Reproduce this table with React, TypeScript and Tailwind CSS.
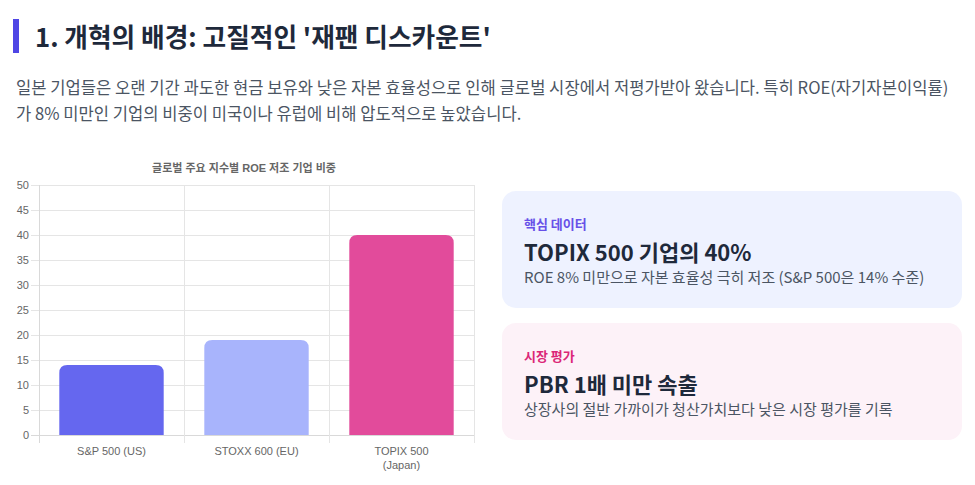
import React from "react";

const bars = [
  { label: ["S&P 500 (US)"], value: 14, color: "#6567ef" },
  { label: ["STOXX 600 (EU)"], value: 19, color: "#a8b4fc" },
  { label: ["TOPIX 500", "(Japan)"], value: 40, color: "#e24b9b" },
];

function Chart() {
  const left = 26;
  const right = 461;
  const top = 35;
  const bottom = 285;
  const cat = (right - left) / 3;
  const bw = cat * 0.72;
  const ticks = [0, 5, 10, 15, 20, 25, 30, 35, 40, 45, 50];
  const y = (v: number) => bottom - (v / 50) * (bottom - top);
  const grid = "#e5e5e5";
  const font = "'Liberation Sans', 'Noto Sans CJK KR', sans-serif";
  return (
    <svg width={462} height={330} viewBox="0 0 462 330" className="block shrink-0">
      <text x={231} y={22} textAnchor="middle" fontSize={11} fontWeight={700} fill="#666" fontFamily={font}>
        글로벌 주요 지수별 ROE 저조 기업 비중
      </text>
      {ticks.map((t) => (
        <g key={t}>
          <line x1={left - 8} x2={right} y1={y(t) + 0.5} y2={y(t) + 0.5} stroke={t === 0 ? "#d9d9d9" : grid} strokeWidth={1} />
          <text x={left - 10} y={y(t) + 4} textAnchor="end" fontSize={11} fill="#666" fontFamily={font}>
            {t}
          </text>
        </g>
      ))}
      {[0, 1, 2, 3].map((i) => (
        <line
          key={i}
          x1={left + i * cat + 0.5}
          x2={left + i * cat + 0.5}
          y1={top}
          y2={bottom + 8}
          stroke={i === 0 ? "#d9d9d9" : grid}
          strokeWidth={1}
        />
      ))}
      {bars.map((b, i) => {
        const cx = left + cat * i + cat / 2;
        const x0 = cx - bw / 2;
        const yt = y(b.value);
        const r = 8;
        const d = `M${x0},${bottom} L${x0},${yt + r} Q${x0},${yt} ${x0 + r},${yt} L${x0 + bw - r},${yt} Q${x0 + bw},${yt} ${x0 + bw},${yt + r} L${x0 + bw},${bottom} Z`;
        return (
          <g key={i}>
            <path d={d} fill={b.color} />
            {b.label.map((l, j) => (
              <text key={j} x={cx} y={305 + j * 14} textAnchor="middle" fontSize={11} fill="#666" fontFamily={font}>
                {l}
              </text>
            ))}
          </g>
        );
      })}
    </svg>
  );
}

export default function App() {
  return (
    <div
      className="w-[975px] h-[485px] bg-white px-[13px] pt-[19px] overflow-hidden"
      style={{ fontFamily: "'Noto Sans CJK KR', 'Noto Sans', sans-serif" }}
    >
      <h2 className="border-l-[6px] border-[#4f46e5] pl-4 text-[25.7px] leading-[34px] font-bold text-[#1e293b]">
        1. 개혁의 배경: 고질적인 '재팬 디스카운트'
      </h2>
      <p className="mt-[21px] pl-[3px] text-[16.6px] leading-[26px] text-[#4b5563]">
        일본 기업들은 오랜 기간 과도한 현금 보유와 낮은 자본 효율성으로 인해 글로벌 시장에서 저평가받아 왔습니다. 특히 ROE(자기자본이익률)가 8% 미만인 기업의 비중이 미국이나 유럽에 비해 압도적으로 높았습니다.
      </p>
      <div className="mt-6 flex items-center gap-[27px]">
        <Chart />
        <div className="flex flex-1 flex-col gap-[15px]">
          <div className="rounded-[14px] bg-[#eef2ff] px-[22px] pt-6 pb-5">
            <div className="text-[13px] leading-[18px] font-bold text-[#6750e8]">핵심 데이터</div>
            <div className="mt-[3px] text-[22px] leading-[30px] font-bold text-[#1e293b]">TOPIX 500 기업의 40%</div>
            <div className="text-[15px] leading-[22px] text-[#4b5563]">
              ROE 8% 미만으로 자본 효율성 극히 저조 (S&P 500은 14% 수준)
            </div>
          </div>
          <div className="rounded-[14px] bg-[#fdf2f8] px-[22px] pt-6 pb-5">
            <div className="text-[13px] leading-[18px] font-bold text-[#db2777]">시장 평가</div>
            <div className="mt-[3px] text-[22px] leading-[30px] font-bold text-[#1e293b]">PBR 1배 미만 속출</div>
            <div className="text-[15px] leading-[22px] text-[#4b5563]">
              상장사의 절반 가까이가 청산가치보다 낮은 시장 평가를 기록
            </div>
          </div>
        </div>
      </div>
    </div>
  );
}
